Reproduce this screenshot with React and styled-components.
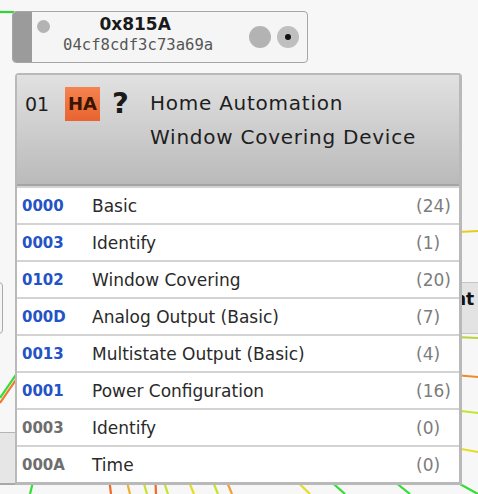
import React from "react";
import styled, { createGlobalStyle } from "styled-components";

const GlobalStyle = createGlobalStyle`
  body {
    margin: 0;
    background: #f7f7f7;
    font-family: "DejaVu Sans", "Noto Sans", sans-serif;
  }
`;

const clusters = [
  { id: "0000", name: "Basic", count: 24, server: true },
  { id: "0003", name: "Identify", count: 1, server: true },
  { id: "0102", name: "Window Covering", count: 20, server: true },
  { id: "000D", name: "Analog Output (Basic)", count: 7, server: true },
  { id: "0013", name: "Multistate Output (Basic)", count: 4, server: true },
  { id: "0001", name: "Power Configuration", count: 16, server: true },
  { id: "0003", name: "Identify", count: 0, server: false },
  { id: "000A", name: "Time", count: 0, server: false },
];

// edges of the node graph peeking out behind the panel
const edges = [
  { d: "M0 12 L14 12", c: "#2fd62f" },
  { d: "M300 240 L478 231", c: "#e6cf1c" },
  { d: "M300 330 L478 338", c: "#b8d23a" },
  { d: "M300 362 L478 377", c: "#ee8a2a" },
  { d: "M300 392 L478 413", c: "#c2e62a" },
  { d: "M300 420 L478 452", c: "#e6dc22" },
  { d: "M380 440 L478 494", c: "#33dd33" },
  { d: "M40 340 L0 398", c: "#33dd33" },
  { d: "M40 345 L0 403", c: "#ee7a2a" },
  { d: "M36 470 L30 494", c: "#33dd33" },
  { d: "M108 470 L111 494", c: "#ee6a2a" },
  { d: "M124 470 L130 494", c: "#f0b030" },
  { d: "M140 470 L147 494", c: "#c6e22a" },
  { d: "M155 470 L156 494", c: "#ee6a2a" },
  { d: "M160 470 L168 494", c: "#c6e22a" },
  { d: "M184 470 L194 494", c: "#e6dc22" },
  { d: "M208 470 L218 494", c: "#c6e22a" },
  { d: "M222 470 L232 494", c: "#f0a030" },
  { d: "M285 470 L310 494", c: "#e6dc22" },
  { d: "M318 470 L345 494", c: "#33dd33" },
  { d: "M380 470 L410 494", c: "#33dd33" },
];

const App = () => {
  return (
    <>
      <GlobalStyle />
      <Canvas>
        <Edges width="478" height="494" viewBox="0 0 478 494">
          {edges.map((e, i) => (
            <path key={i} d={e.d} stroke={e.c} strokeWidth="2.2" fill="none" />
          ))}
        </Edges>

        <GhostNode style={{ left: -100, top: 282, width: 103, height: 52 }} />
        <GhostHeaderNode style={{ left: -100, top: 432, width: 148, height: 53 }}>
          <GhostDot />
        </GhostHeaderNode>
        <SideNode>nt</SideNode>

        <NodeCard>
          <Strip />
          <SmallDot />
          <Address>
            <ShortAddr>0x815A</ShortAddr>
            <LongAddr>04cf8cdf3c73a69a</LongAddr>
          </Address>
          <Ports>
            <Port />
            <Port $active />
          </Ports>
        </NodeCard>

        <Panel>
          <Header>
            <Endpoint>01</Endpoint>
            <Profile>HA</Profile>
            <Unknown>?</Unknown>
            <Titles>
              <span>Home Automation</span>
              <span>Window Covering Device</span>
            </Titles>
          </Header>
          {clusters.map((c, i) => (
            <Row key={i}>
              <ClusterId $server={c.server}>{c.id}</ClusterId>
              <ClusterName>{c.name}</ClusterName>
              <Count>({c.count})</Count>
            </Row>
          ))}
        </Panel>
      </Canvas>
    </>
  );
};

const Canvas = styled.div`
  position: relative;
  width: 478px;
  height: 494px;
  overflow: hidden;
  background: #f7f7f7;
`;

const Edges = styled.svg`
  position: absolute;
  left: 0;
  top: 0;
`;

const GhostNode = styled.div`
  position: absolute;
  box-sizing: border-box;
  border: 1px solid #a9a9a9;
  border-radius: 4px;
  background: #f5f5f5;
`;

const GhostHeaderNode = styled(GhostNode)`
  background: #e6e6e6;
  border-color: #b4b4b4;
  border-bottom: 2px solid #a8a8a8;
  border-radius: 0;
`;

const GhostDot = styled.div`
  position: absolute;
  right: -8px;
  top: 16px;
  width: 19px;
  height: 19px;
  border-radius: 50%;
  background: #bcbcbc;
`;

const SideNode = styled.div`
  position: absolute;
  left: 440px;
  top: 282px;
  width: 60px;
  height: 52px;
  box-sizing: border-box;
  padding: 6px 0 0 13px;
  background: #e3e3e3;
  border: 1px solid #c4c4c4;
  font-weight: bold;
  font-size: 17px;
  color: #111;
`;

const NodeCard = styled.div`
  position: absolute;
  left: 12px;
  top: 11px;
  width: 296px;
  height: 52px;
  box-sizing: border-box;
  display: flex;
  align-items: flex-start;
  background: #f5f5f5;
  border: 1px solid #a6a6a6;
  border-radius: 4px;
  overflow: hidden;
`;

const Strip = styled.div`
  width: 19px;
  align-self: stretch;
  background: #9b9b9b;
`;

const SmallDot = styled.div`
  width: 13px;
  height: 13px;
  margin: 8px 0 0 5px;
  border-radius: 50%;
  background: #b3b3b3;
`;

const Address = styled.div`
  display: flex;
  flex-direction: column;
  align-items: center;
  margin-left: 13px;
  padding-top: 2px;
`;

const ShortAddr = styled.div`
  font-weight: bold;
  font-size: 17px;
  line-height: 20px;
  color: #1a1a1a;
  margin-right: 6px;
`;

const LongAddr = styled.div`
  font-family: "DejaVu Sans Mono", "Liberation Mono", monospace;
  font-size: 15.6px;
  line-height: 22px;
  color: #555;
`;

const Ports = styled.div`
  margin-left: auto;
  margin-right: 8px;
  align-self: center;
  display: flex;
  align-items: center;
  gap: 6px;
`;

const Port = styled.div`
  width: 22px;
  height: 22px;
  border-radius: 50%;
  background: ${(p) => (p.$active ? "#bfbfbf" : "#b3b3b3")};
  position: relative;
  &::after {
    content: "";
    display: ${(p) => (p.$active ? "block" : "none")};
    position: absolute;
    left: 8px;
    top: 8px;
    width: 6px;
    height: 6px;
    border-radius: 50%;
    background: #111;
  }
`;

const Panel = styled.div`
  position: absolute;
  left: 15px;
  top: 73px;
  width: 447px;
  box-sizing: border-box;
  background: #fff;
  border: 2px solid #b9b9b9;
  border-right-width: 3px;
  border-bottom-width: 3px;
  border-radius: 4px 4px 0 0;
`;

const Header = styled.div`
  height: 111px;
  display: flex;
  align-items: flex-start;
  box-sizing: border-box;
  padding: 15px 0 0 8px;
  background: linear-gradient(#e1e1e1, #bababa);
  border-bottom: 2px solid #a4a4a4;
  color: #1e1e1e;
`;

const Endpoint = styled.div`
  width: 40px;
  font-size: 19px;
  line-height: 26px;
  padding-top: 1px;
`;

const Profile = styled.div`
  width: 35px;
  height: 34px;
  margin-top: -3px;
  box-sizing: border-box;
  padding-top: 6px;
  text-align: center;
  background: linear-gradient(#f58350, #e8632f);
  color: #3a1500;
  font-weight: bold;
  font-size: 18px;
  line-height: 22px;
`;

const Unknown = styled.div`
  width: 38px;
  margin-left: 12px;
  margin-top: -4px;
  font-size: 29px;
  line-height: 34px;
  font-weight: bold;
  color: #1a1a1a;
`;

const Titles = styled.div`
  display: flex;
  flex-direction: column;
  font-size: 20px;
  letter-spacing: 0.75px;
  line-height: 34px;
  margin-top: -4px;
`;

const Row = styled.div`
  display: grid;
  grid-template-columns: 70px 1fr 43px;
  align-items: center;
  height: 37px;
  box-sizing: border-box;
  padding-left: 5px;
  border-top: 2px solid #d3d3d3;
  &:first-of-type {
    border-top: none;
  }
`;

const ClusterId = styled.span`
  font-weight: bold;
  font-size: 15px;
  color: ${(p) => (p.$server ? "#2353c4" : "#6e6e6e")};
`;

const ClusterName = styled.span`
  font-size: 17px;
  color: #2a2a2a;
`;

const Count = styled.span`
  font-size: 17px;
  color: #7c7c7c;
`;

export default App;
